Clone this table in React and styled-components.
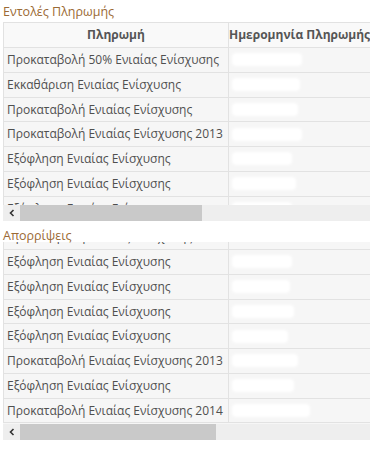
import React from "react";
import styled, { createGlobalStyle } from "styled-components";

const GlobalStyle = createGlobalStyle`
  body {
    margin: 0;
    background: #ffffff;
    font-family: "Open Sans", "Liberation Sans", sans-serif;
  }
`;

const payments = [
  { name: "Προκαταβολή 50% Ενιαίας Ενίσχυσης", blot: 70 },
  { name: "Εκκαθάριση Ενιαίας Ενίσχυσης", blot: 68 },
  { name: "Προκαταβολή Ενιαίας Ενίσχυσης", blot: 66 },
  { name: "Προκαταβολή Ενιαίας Ενίσχυσης 2013", blot: 70 },
  { name: "Εξόφληση Ενιαίας Ενίσχυσης", blot: 60 },
  { name: "Εξόφληση Ενιαίας Ενίσχυσης", blot: 64 },
  { name: "Εξόφληση Ενιαίας Ενίσχυσης", blot: 60 },
];

const rejections = [
  { name: "Προκαταβολή Ενιαίας Ενίσχυσης", blot: 0 },
  { name: "Εξόφληση Ενιαίας Ενίσχυσης", blot: 60 },
  { name: "Εξόφληση Ενιαίας Ενίσχυσης", blot: 58 },
  { name: "Εξόφληση Ενιαίας Ενίσχυσης", blot: 62 },
  { name: "Εξόφληση Ενιαίας Ενίσχυσης", blot: 56 },
  { name: "Προκαταβολή Ενιαίας Ενίσχυσης 2013", blot: 66 },
  { name: "Εξόφληση Ενιαίας Ενίσχυσης", blot: 62 },
  { name: "Προκαταβολή Ενιαίας Ενίσχυσης 2014", blot: 78 },
];

const Chevron = () => (
  <svg width="6" height="8" viewBox="0 0 6 8">
    <path d="M4.5 1 L1.5 4 L4.5 7" fill="none" stroke="#333" strokeWidth="1.6" />
  </svg>
);

export default function App() {
  return (
    <>
      <GlobalStyle />
      <Page>
        <Title>Εντολές Πληρωμής</Title>
        <Viewport $height={183}>
          <Table>
            <HeadRow>
              <HeadCell>Πληρωμή</HeadCell>
              <HeadCell>Ημερομηνία Πληρωμής</HeadCell>
            </HeadRow>
            {payments.map((p, i) => (
              <Row key={i}>
                <Cell>{p.name}</Cell>
                <Cell>
                  <Blot style={{ width: p.blot }} />
                </Cell>
              </Row>
            ))}
          </Table>
        </Viewport>
        <ScrollBar>
          <Arrow>
            <Chevron />
          </Arrow>
          <Thumb $width={182} />
        </ScrollBar>

        <Title $tight>Απορρίψεις</Title>
        <Viewport $height={182}>
          <Table $shift={-17.75}>
            {rejections.map((p, i) => (
              <Row key={i}>
                <Cell>{p.name}</Cell>
                <Cell>{p.blot > 0 && <Blot style={{ width: p.blot }} />}</Cell>
              </Row>
            ))}
          </Table>
        </Viewport>
        <ScrollBar>
          <Arrow>
            <Chevron />
          </Arrow>
          <Thumb $width={196} />
        </ScrollBar>
      </Page>
    </>
  );
}

const Page = styled.div`
  width: 367px;
  padding: 0 3px;
`;

const Title = styled.div`
  color: #9b6a35;
  font-size: 12.5px;
  height: ${(p) => (p.$tight ? "20px" : "22px")};
  line-height: ${(p) => (p.$tight ? "27px" : "24px")};
  padding-top: ${(p) => (p.$tight ? "1px" : "0")};
  position: relative;
  z-index: 2;
  white-space: nowrap;
`;

const Viewport = styled.div`
  height: ${(p) => p.$height}px;
  overflow: hidden;
  background: #f6f6f6;
`;

const Table = styled.div`
  display: grid;
  grid-template-columns: 225px 142px;
  margin-top: ${(p) => p.$shift || 0}px;
  border-left: 1px solid #e2e2e2;
  border-top: 1px solid #e2e2e2;
`;

const HeadRow = styled.div`
  display: contents;
`;

const Row = styled.div`
  display: contents;
`;

const HeadCell = styled.div`
  height: 24px;
  line-height: 24px;
  background: #f9f9f9;
  color: #555555;
  font-weight: 700;
  font-size: 12px;
  text-align: center;
  border-right: 1px solid #e2e2e2;
  border-bottom: 1px solid #e2e2e2;
  white-space: nowrap;
`;

const Cell = styled.div`
  height: 23.75px;
  line-height: 23.75px;
  background: #f6f6f6;
  color: #4f4f4f;
  font-size: 12px;
  padding: 0 3px;
  border-right: 1px solid #e2e2e2;
  border-bottom: 1px solid #e2e2e2;
  white-space: nowrap;
  overflow: hidden;
  display: flex;
  align-items: center;
`;

const Blot = styled.span`
  display: inline-block;
  height: 13px;
  border-radius: 4px;
  background: #ffffff;
  filter: blur(1.5px);
`;

const ScrollBar = styled.div`
  height: 16px;
  background: #eeeeee;
  display: flex;
  align-items: center;
`;

const Arrow = styled.span`
  width: 17px;
  height: 16px;
  display: flex;
  align-items: center;
  justify-content: center;
`;

const Thumb = styled.div`
  width: ${(p) => p.$width}px;
  height: 16px;
  background: #c9c9c9;
`;
